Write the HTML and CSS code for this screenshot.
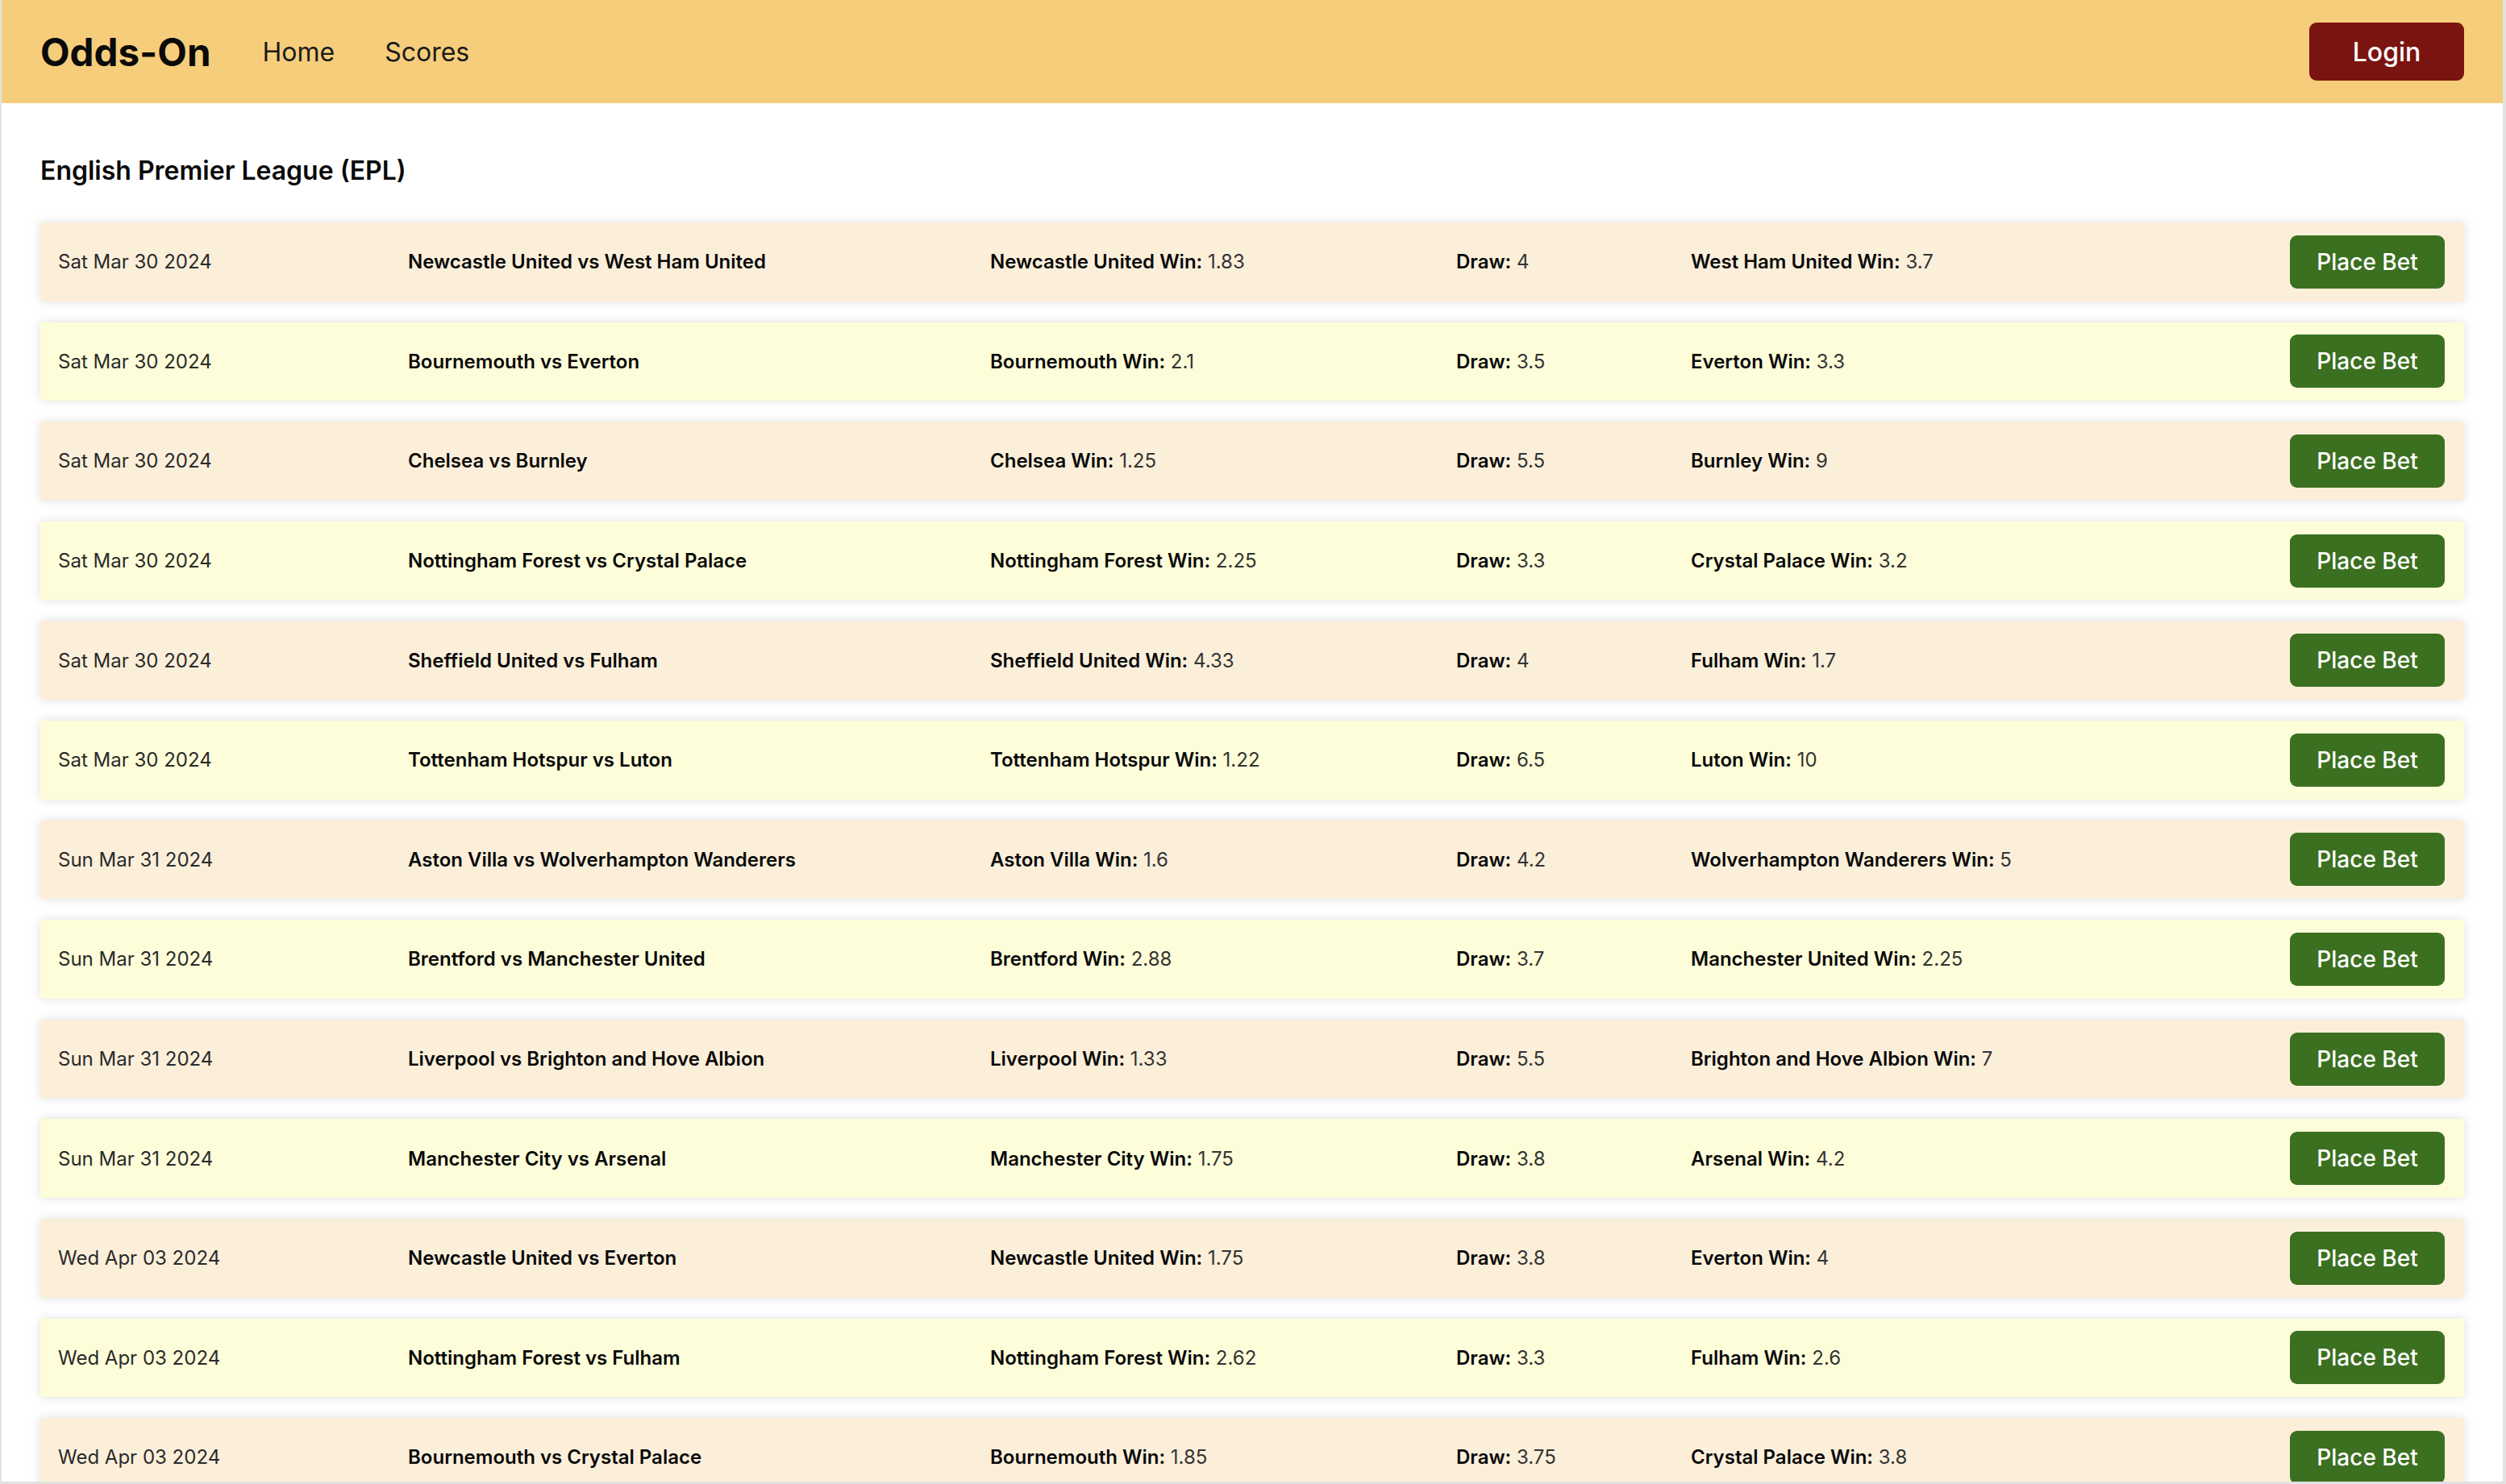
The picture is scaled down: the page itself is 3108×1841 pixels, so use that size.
FILE: index.html
```html
<!DOCTYPE html>
<html lang="en">
<head>
<meta charset="utf-8">
<title>Odds-On</title>
<link rel="stylesheet" href="styles.css">
</head>
<body>
<div class="window">
  <header class="topbar">
    <div class="brand">Odds-On</div>
    <nav class="nav">
      <a class="nav-link" href="#">Home</a>
      <a class="nav-link" href="#">Scores</a>
    </nav>
    <button class="login">Login</button>
  </header>
  <main class="content">
    <h2 class="league">English Premier League (EPL)</h2>
    <div class="matches">
      <div class="match odd"><span class="date">Sat Mar 30 2024</span><span class="teams">Newcastle United vs West Ham United</span><span class="odd-cell"><b>Newcastle United Win:</b> 1.83</span><span class="odd-cell"><b>Draw:</b> 4</span><span class="odd-cell"><b>West Ham United Win:</b> 3.7</span><button class="bet">Place Bet</button></div>
      <div class="match even"><span class="date">Sat Mar 30 2024</span><span class="teams">Bournemouth vs Everton</span><span class="odd-cell"><b>Bournemouth Win:</b> 2.1</span><span class="odd-cell"><b>Draw:</b> 3.5</span><span class="odd-cell"><b>Everton Win:</b> 3.3</span><button class="bet">Place Bet</button></div>
      <div class="match odd"><span class="date">Sat Mar 30 2024</span><span class="teams">Chelsea vs Burnley</span><span class="odd-cell"><b>Chelsea Win:</b> 1.25</span><span class="odd-cell"><b>Draw:</b> 5.5</span><span class="odd-cell"><b>Burnley Win:</b> 9</span><button class="bet">Place Bet</button></div>
      <div class="match even"><span class="date">Sat Mar 30 2024</span><span class="teams">Nottingham Forest vs Crystal Palace</span><span class="odd-cell"><b>Nottingham Forest Win:</b> 2.25</span><span class="odd-cell"><b>Draw:</b> 3.3</span><span class="odd-cell"><b>Crystal Palace Win:</b> 3.2</span><button class="bet">Place Bet</button></div>
      <div class="match odd"><span class="date">Sat Mar 30 2024</span><span class="teams">Sheffield United vs Fulham</span><span class="odd-cell"><b>Sheffield United Win:</b> 4.33</span><span class="odd-cell"><b>Draw:</b> 4</span><span class="odd-cell"><b>Fulham Win:</b> 1.7</span><button class="bet">Place Bet</button></div>
      <div class="match even"><span class="date">Sat Mar 30 2024</span><span class="teams">Tottenham Hotspur vs Luton</span><span class="odd-cell"><b>Tottenham Hotspur Win:</b> 1.22</span><span class="odd-cell"><b>Draw:</b> 6.5</span><span class="odd-cell"><b>Luton Win:</b> 10</span><button class="bet">Place Bet</button></div>
      <div class="match odd"><span class="date">Sun Mar 31 2024</span><span class="teams">Aston Villa vs Wolverhampton Wanderers</span><span class="odd-cell"><b>Aston Villa Win:</b> 1.6</span><span class="odd-cell"><b>Draw:</b> 4.2</span><span class="odd-cell"><b>Wolverhampton Wanderers Win:</b> 5</span><button class="bet">Place Bet</button></div>
      <div class="match even"><span class="date">Sun Mar 31 2024</span><span class="teams">Brentford vs Manchester United</span><span class="odd-cell"><b>Brentford Win:</b> 2.88</span><span class="odd-cell"><b>Draw:</b> 3.7</span><span class="odd-cell"><b>Manchester United Win:</b> 2.25</span><button class="bet">Place Bet</button></div>
      <div class="match odd"><span class="date">Sun Mar 31 2024</span><span class="teams">Liverpool vs Brighton and Hove Albion</span><span class="odd-cell"><b>Liverpool Win:</b> 1.33</span><span class="odd-cell"><b>Draw:</b> 5.5</span><span class="odd-cell"><b>Brighton and Hove Albion Win:</b> 7</span><button class="bet">Place Bet</button></div>
      <div class="match even"><span class="date">Sun Mar 31 2024</span><span class="teams">Manchester City vs Arsenal</span><span class="odd-cell"><b>Manchester City Win:</b> 1.75</span><span class="odd-cell"><b>Draw:</b> 3.8</span><span class="odd-cell"><b>Arsenal Win:</b> 4.2</span><button class="bet">Place Bet</button></div>
      <div class="match odd"><span class="date">Wed Apr 03 2024</span><span class="teams">Newcastle United vs Everton</span><span class="odd-cell"><b>Newcastle United Win:</b> 1.75</span><span class="odd-cell"><b>Draw:</b> 3.8</span><span class="odd-cell"><b>Everton Win:</b> 4</span><button class="bet">Place Bet</button></div>
      <div class="match even"><span class="date">Wed Apr 03 2024</span><span class="teams">Nottingham Forest vs Fulham</span><span class="odd-cell"><b>Nottingham Forest Win:</b> 2.62</span><span class="odd-cell"><b>Draw:</b> 3.3</span><span class="odd-cell"><b>Fulham Win:</b> 2.6</span><button class="bet">Place Bet</button></div>
      <div class="match odd"><span class="date">Wed Apr 03 2024</span><span class="teams">Bournemouth vs Crystal Palace</span><span class="odd-cell"><b>Bournemouth Win:</b> 1.85</span><span class="odd-cell"><b>Draw:</b> 3.75</span><span class="odd-cell"><b>Crystal Palace Win:</b> 3.8</span><button class="bet">Place Bet</button></div>
    </div>
  </main>
</div>
</body>
</html>
```

FILE: styles.css
```css
* { box-sizing: border-box; }

html, body {
  margin: 0;
  padding: 0;
  background: #ffffff;
}

body {
  font-family: Inter, "Noto Sans", "Liberation Sans", sans-serif;
  color: #111;
}

.window {
  width: 3108px;
  height: 1841px;
  overflow: hidden;
  border-left: 2px solid #e2e2e2;
  border-right: 4px solid #e2e2e2;
  border-bottom: 3px solid #e2e2e2;
  background: #fff;
}

.topbar {
  height: 128px;
  background: #f6cd7b;
  display: flex;
  align-items: center;
  padding: 0 48px;
}

.brand {
  font-size: 47.5px;
  font-weight: 700;
  color: #0a0a0a;
  margin-right: 64px;
}

.nav {
  display: flex;
  gap: 62px;
  flex: 1;
}

.nav-link {
  font-size: 32px;
  font-weight: 400;
  color: #1a1a1a;
  text-decoration: none;
}

.login {
  width: 192px;
  height: 72px;
  border: none;
  border-radius: 9px;
  background: #7a1410;
  color: #ffffff;
  font-family: Inter, "Noto Sans", sans-serif;
  font-size: 32px;
  font-weight: 500;
  padding: 0;
}

.content {
  padding: 0 48px;
}

.league {
  margin: 64px 0 44px;
  font-size: 32px;
  line-height: 40px;
  font-weight: 600;
  color: #0a0a0a;
}

.matches {
  display: flex;
  flex-direction: column;
  gap: 26px;
}

.match {
  height: 97.6px;
  flex-shrink: 0;
  display: grid;
  grid-template-columns: 434px 722px 578px 291px 1fr 192px;
  align-items: center;
  padding: 0 24px 0 22px;
  box-shadow: 0 0 12px rgba(0, 0, 0, 0.13);
  font-size: 24px;
}

.match.odd { background: #fbefda; }
.match.even { background: #fdfdd9; }

.date {
  color: #2a2a2a;
  font-weight: 400;
}

.teams {
  font-weight: 600;
  color: #0a0a0a;
}

.odd-cell {
  color: #333;
  font-weight: 400;
}

.odd-cell b {
  font-weight: 600;
  color: #0a0a0a;
}

.bet {
  width: 192px;
  height: 66px;
  border: none;
  border-radius: 9px;
  background: #3c7021;
  color: #ffffff;
  font-family: Inter, "Noto Sans", sans-serif;
  font-size: 28px;
  font-weight: 500;
  padding: 0;
}
```
